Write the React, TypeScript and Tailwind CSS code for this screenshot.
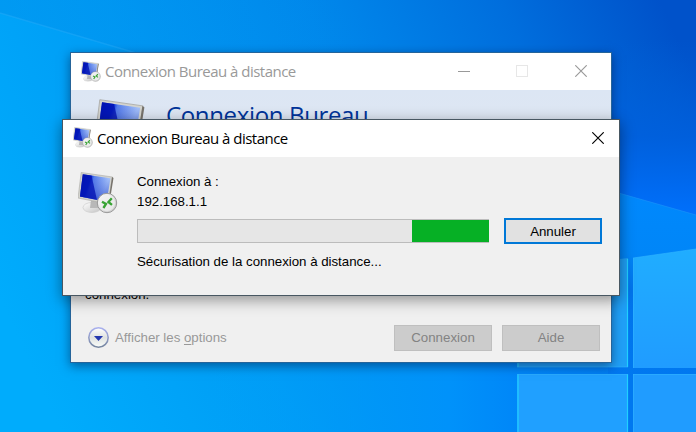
import React, { useId } from "react";

function Wallpaper() {
  return (
    <svg className="absolute inset-0" width="696" height="432" viewBox="0 0 696 432">
      <defs>
        <linearGradient id="sky" gradientUnits="userSpaceOnUse" x1="0" y1="300" x2="660" y2="0">
          <stop offset="0" stopColor="#00acfc" />
          <stop offset="0.3" stopColor="#009cf5" />
          <stop offset="0.55" stopColor="#0089ec" />
          <stop offset="0.8" stopColor="#006edd" />
          <stop offset="1" stopColor="#0052ca" />
        </linearGradient>
        <linearGradient id="topBand" x1="0" y1="0" x2="1" y2="0">
          <stop offset="0" stopColor="#0084e4" stopOpacity="0.3" />
          <stop offset="1" stopColor="#0084e4" stopOpacity="0" />
        </linearGradient>
        <linearGradient id="lowRight" gradientUnits="userSpaceOnUse" x1="200" y1="0" x2="696" y2="0">
          <stop offset="0" stopColor="#00a4fa" stopOpacity="0" />
          <stop offset="0.5" stopColor="#0092fa" />
          <stop offset="0.65" stopColor="#0086f8" />
          <stop offset="1" stopColor="#0076ee" />
        </linearGradient>
        <linearGradient id="beam" gradientUnits="userSpaceOnUse" x1="0" y1="200" x2="0" y2="380">
          <stop offset="0" stopColor="#0088fc" />
          <stop offset="0.3" stopColor="#0086f8" />
          <stop offset="0.5" stopColor="#0074ec" />
          <stop offset="1" stopColor="#0078f0" />
        </linearGradient>
        <linearGradient id="pane" x1="0" y1="0" x2="0" y2="1">
          <stop offset="0" stopColor="#20adff" />
          <stop offset="1" stopColor="#209cff" />
        </linearGradient>
        <linearGradient id="rightEdge" gradientUnits="userSpaceOnUse" x1="0" y1="40" x2="0" y2="215">
          <stop offset="0" stopColor="#0060d8" stopOpacity="0" />
          <stop offset="0.55" stopColor="#0060de" stopOpacity="0.85" />
          <stop offset="1" stopColor="#0070fc" />
        </linearGradient>
      </defs>
      <rect width="696" height="432" fill="url(#sky)" />
      <path d="M0 13L136 53H400L330 0H0Z" fill="url(#topBand)" />
      <path d="M0 13L136 53" stroke="#30b0fa" strokeOpacity="0.35" strokeWidth="1.4" />
      <rect x="600" y="40" width="96" height="200" fill="url(#rightEdge)" />
      <rect y="350" x="200" width="496" height="82" fill="url(#lowRight)" />
      <path d="M608 190L696 215V432H608Z" fill="url(#beam)" />
      <path d="M608 190L696 215" stroke="#1c94f8" strokeOpacity="0.6" />
      <path d="M517 271L628 258V367H517Z" fill="#20a0f7" />
      <path d="M633 258L696 249V368H633Z" fill="url(#pane)" />
      <path d="M517 374H628V432H517Z" fill="#20a0ff" />
      <path d="M633 374H696V432H633Z" fill="#209cff" />
      <path d="M518 360V367M518 374V432M627.5 259V367M627.5 374V432" stroke="#20d0ff" strokeWidth="1.2" />
      <path d="M633.5 258V368M633.5 374V432M517 374.5H628M633 374.5H696M517 367H628M633 258L696 249" stroke="#30b4ff" strokeOpacity="0.6" fill="none" />
    </svg>
  );
}

function RemoteIcon({ className, badge = true }: { className: string; badge?: boolean }) {
  const id = useId();
  return (
    <svg className={className} viewBox="0 0 40 42" aria-hidden="true">
      <defs>
        <linearGradient id={`${id}s`} x1="0" y1="0" x2="0.9" y2="0.3">
          <stop offset="0" stopColor="#0618a8" />
          <stop offset="0.4" stopColor="#1238dc" />
          <stop offset="0.5" stopColor="#5c84ee" />
          <stop offset="1" stopColor="#b4d0ff" />
        </linearGradient>
        <linearGradient id={`${id}d`} x1="0" y1="0" x2="0" y2="1">
          <stop offset="0" stopColor="#0828c0" stopOpacity="0" />
          <stop offset="1" stopColor="#0828c0" stopOpacity="0.65" />
        </linearGradient>
        <linearGradient id={`${id}g`} x1="0" y1="0" x2="1" y2="1">
          <stop offset="0" stopColor="#ffffff" />
          <stop offset="1" stopColor="#c4c4c4" />
        </linearGradient>
      </defs>
      <ellipse cx="14" cy="35.5" rx="9" ry="5" fill={`url(#${id}g)`} stroke="#c6c6c6" strokeWidth="0.6" />
      <path d="M13 28L23 30L21 36H12Z" fill="#b8b8b8" />
      <path d="M3.2 0.5L34.5 5L30 32L0 26Z" fill="#d4d4ce" stroke="#a9a9a6" strokeWidth="0.6" />
      <path d="M34 5L35.5 6L31.2 32.5L30 32Z" fill="#77736c" />
      <path d="M4.8 2.3L32.4 6.3L28.7 29.8L2 24.5Z" fill={`url(#${id}s)`} />
      <path d="M4.8 2.3L32.4 6.3L28.7 29.8L2 24.5Z" fill={`url(#${id}d)`} />
      <path d="M4.8 2.3L13.5 3.6L19 27.9L2 24.5Z" fill="#000fb0" fillOpacity="0.75" />
      {badge && (
        <g>
          <circle cx="29" cy="31" r="9.7" fill={`url(#${id}g)`} stroke="#999" strokeWidth="1" />
          <circle cx="29" cy="31" r="8" fill="#f0f0f0" fillOpacity="0.75" />
          <path d="M24 29.8L28 32L25.4 36M33.8 26.2L30.4 30L34 32.8" fill="none" stroke="#38a334" strokeWidth="2.3" />
        </g>
      )}
    </svg>
  );
}

function CloseGlyph({ className }: { className: string }) {
  return (
    <svg className={className} width="12" height="12" viewBox="0 0 12 12" fill="none" stroke="currentColor">
      <path d="M0.3 0.3L11.7 11.7M11.7 0.3L0.3 11.7" strokeWidth="1.15" />
    </svg>
  );
}

function BackWindow() {
  return (
    <section className="absolute left-[70px] top-[52px] flex h-[311px] w-[542px] flex-col border border-[#25649a] bg-[#f0f0f0] shadow-[0_3px_10px_rgba(0,20,60,0.5)]">
      <header className="flex h-[37px] shrink-0 items-center bg-white pb-px pl-[10px] text-[#999]">
        <RemoteIcon className="h-[21px] w-5 shrink-0" />
        <h2 className="ml-1 w-[200px] whitespace-nowrap font-['Open_Sans',sans-serif] text-[15px] leading-5 tracking-[-0.52px]">
          Connexion Bureau à distance
        </h2>
        <div className="ml-auto mr-[24px] flex items-center">
          <span className="h-px w-3 bg-[#999]" />
          <span className="ml-[46px] size-3 border border-[#e7e7e7]" />
          <CloseGlyph className="ml-[47px]" />
        </div>
      </header>
      <div className="flex h-[70px] shrink-0 overflow-hidden bg-gradient-to-b from-[#dce6f4] to-[#e0e7f1] pl-6 pt-[9px]">
        <RemoteIcon className="h-[58px] w-[56px]" badge={false} />
        <p className="ml-[15px] whitespace-nowrap font-['Open_Sans',sans-serif] text-[24px] leading-[32px] tracking-[-0.35px] text-[#003399]">
          Connexion Bureau
        </p>
      </div>
      <p className="mt-[127px] pl-[14px] text-[13.3px] leading-4 text-black">connexion.</p>
      <footer className="mt-auto flex h-[37px] shrink-0 items-start pl-[17px] pr-[11px]">
        <svg className="mt-[2px]" width="22" height="22" viewBox="0 0 22 22">
          <defs>
            <linearGradient id="knob" x1="0" y1="0" x2="0" y2="1">
              <stop offset="0" stopColor="#fff" />
              <stop offset="0.5" stopColor="#dfe2e0" />
              <stop offset="1" stopColor="#fafdfb" />
            </linearGradient>
            <linearGradient id="knobRing" x1="0" y1="0" x2="0" y2="1">
              <stop offset="0" stopColor="#a9b0ee" />
              <stop offset="1" stopColor="#76869f" />
            </linearGradient>
          </defs>
          <circle cx="10.5" cy="10.5" r="9.7" fill="url(#knob)" stroke="url(#knobRing)" strokeWidth="1.5" />
          <path d="M6 9H15L10.5 14Z" fill="#2438ae" />
        </svg>
        <span className="ml-[5px] mt-[5px] text-[13.3px] leading-4 tracking-[-0.02px] text-[#999]">
          Afficher les <span className="underline underline-offset-2">o</span>ptions
        </span>
        <div className="ml-auto flex gap-[10px]">
          <button className="h-[26px] w-[98px] border border-[#bfbfbf] bg-[#ccc] text-[13.3px] text-[#838383]">Connexion</button>
          <button className="h-[26px] w-[98px] border border-[#bfbfbf] bg-[#ccc] text-[13.3px] text-[#838383]">Aide</button>
        </div>
      </footer>
    </section>
  );
}

function ProgressDialog() {
  return (
    <section className="absolute left-[62px] top-[119px] flex h-[177px] w-[558px] flex-col border border-[#485762] bg-[#f0f0f0] shadow-[0_4px_14px_rgba(0,0,0,0.4)]">
      <header className="flex h-[37px] shrink-0 items-center bg-white pb-[2px] pl-[10px] text-black">
        <RemoteIcon className="h-[21px] w-5 shrink-0" />
        <h1 className="ml-1 whitespace-nowrap font-['Open_Sans',sans-serif] text-[15px] leading-5 tracking-[-0.52px]">
          Connexion Bureau à distance
        </h1>
        <CloseGlyph className="ml-auto mr-[15px]" />
      </header>
      <div className="flex flex-1 pl-[15px] pt-[15px] text-[13.3px] leading-5 text-black">
        <RemoteIcon className="h-[42px] w-10 shrink-0" />
        <div className="ml-[19px] flex flex-col tracking-[-0.02px]">
          <p>Connexion à :</p>
          <p>192.168.1.1</p>
          <div className="mt-[6px] flex h-[26px] items-center">
            <div className="flex h-6 w-[352px] justify-end border-y border-l border-[#bcbcbc] bg-[#e6e6e6]">
              <div className="h-full w-[77px] bg-[#06b025]" />
            </div>
            <button className="ml-[15px] h-[26px] w-[98px] border-2 border-[#0078d7] bg-[#e1e1e1] pt-px text-[13.3px] leading-4">
              Annuler
            </button>
          </div>
          <p className="mt-[8px]">Sécurisation de la connexion à distance...</p>
        </div>
      </div>
    </section>
  );
}

export default function App() {
  return (
    <main className="relative h-[432px] w-[696px] overflow-hidden font-['Liberation_Sans',Arial,sans-serif]">
      <Wallpaper />
      <BackWindow />
      <ProgressDialog />
    </main>
  );
}
